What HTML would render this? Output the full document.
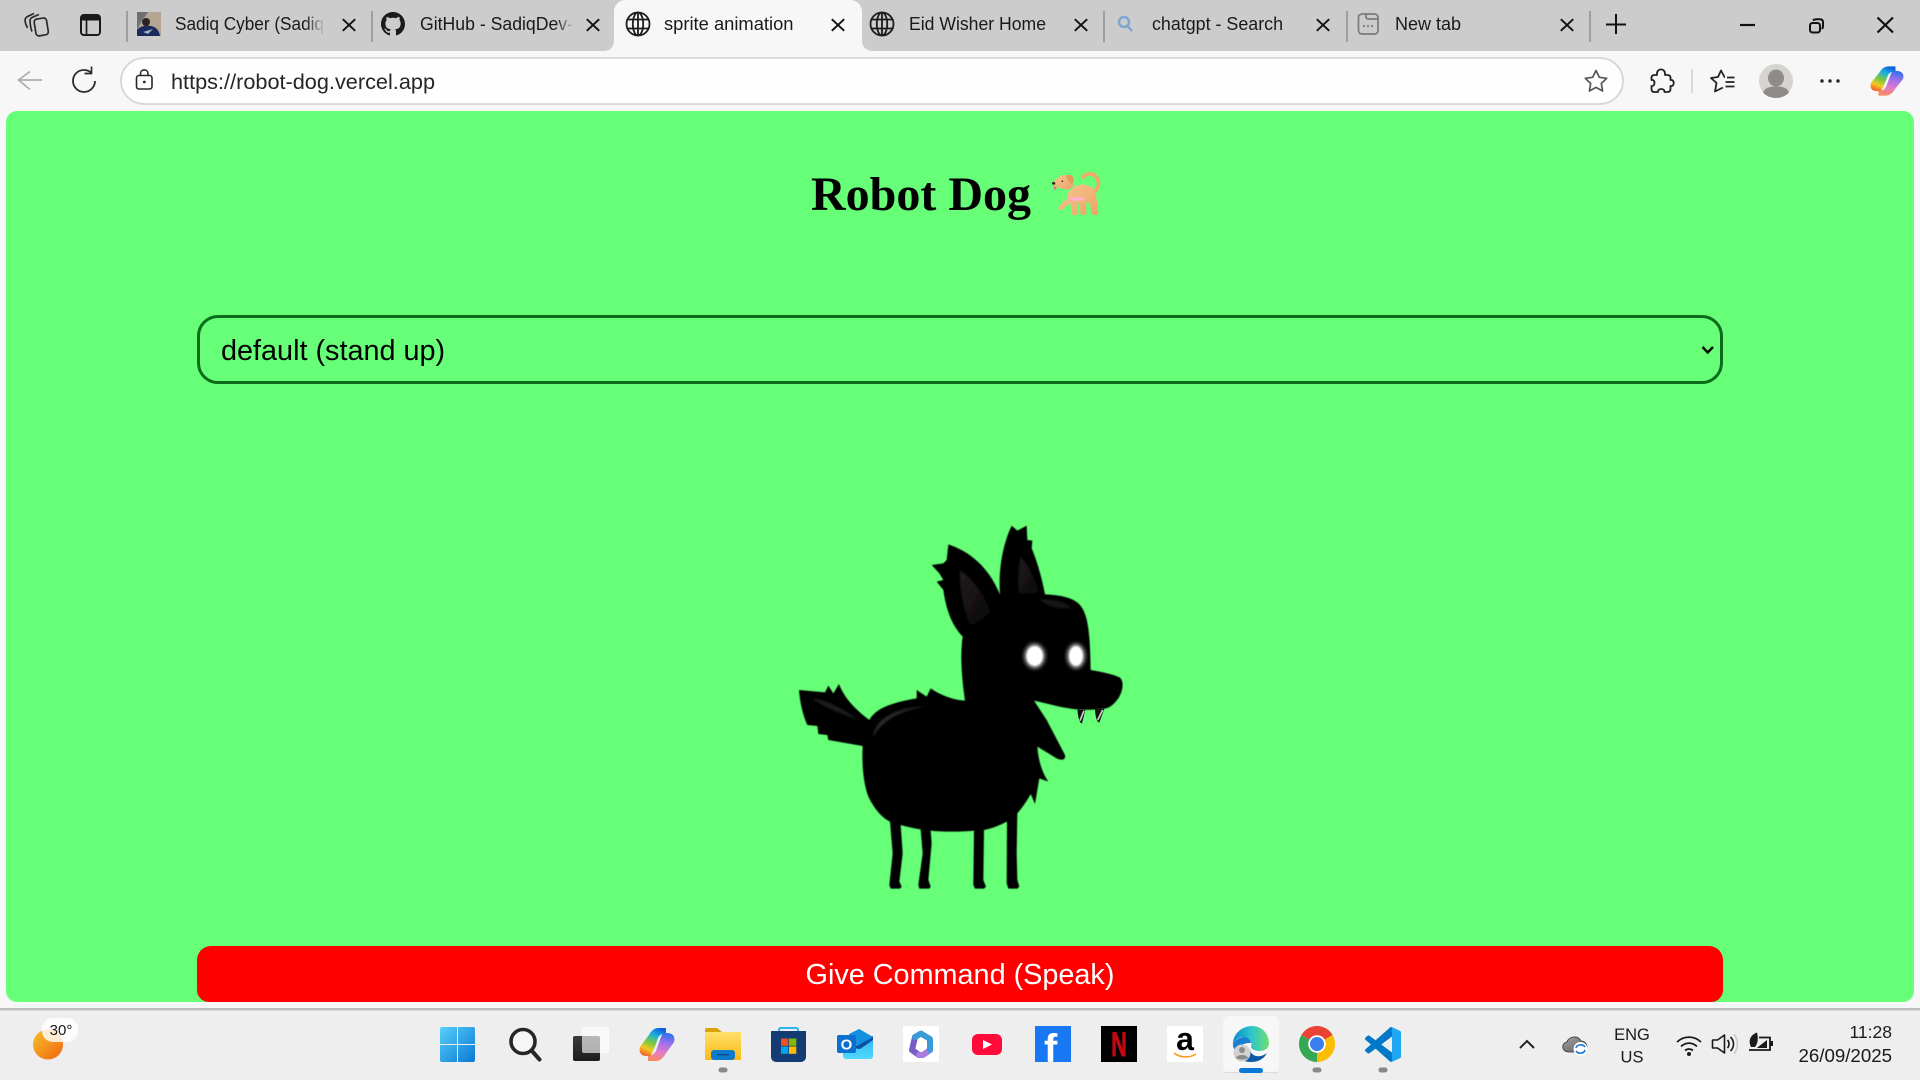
<!DOCTYPE html>
<html lang="en"><head><meta charset="utf-8"><title>sprite animation</title>
<style>
html,body{margin:0;padding:0;width:1920px;height:1080px;overflow:hidden;background:#f7f7f7;font-family:"Liberation Sans",sans-serif}
#page{position:absolute;left:6px;top:111px;width:1908px;height:891px;background:#66ff77;border-radius:11px;overflow:hidden}
h1{position:absolute;margin:0;left:805px;top:54px;font:bold 48px/60px "Liberation Serif",serif;color:#000;white-space:nowrap}
select{position:absolute;left:191px;top:204px;width:1526px;height:69px;box-sizing:border-box;border:3px solid #0d6b1b;border-radius:21px;background:transparent;appearance:none;-webkit-appearance:none;font:28.8px "Liberation Sans",sans-serif;color:#000;padding:2px 0 0 21px;outline:none}
button{position:absolute;left:191px;top:835px;width:1526px;height:56px;border:0;border-radius:14px 14px 12px 12px;background:#f00;color:#fff;font:28.8px "Liberation Sans",sans-serif;padding:2px 0 0}
#top{position:absolute;left:0;top:0;width:1920px;height:1080px;pointer-events:none}
#top text{font-family:"Liberation Sans",sans-serif;fill:#1a1a1a}
.x{stroke:#111;stroke-width:1.9;fill:none}
</style></head><body>
<div id="page">
<h1>Robot Dog</h1>
<select><option>default (stand up)</option></select>
<button>Give Command (Speak)</button>
</div>
<svg id="top" width="1920" height="1080" viewBox="0 0 1920 1080" xmlns="http://www.w3.org/2000/svg">
<defs>
<g id="globe" fill="none" stroke="#1c1c1c" stroke-width="1.8"><circle r="11.5"/><ellipse rx="5.2" ry="11.5"/><path d="M0-11.5V11.5M-10.5-4.5H10.5M-10.5 4.5H10.5"/></g>
<g id="xx" class="x"><path d="M-6.2-5.8 6.2 5.8M6.2-5.8-6.2 5.8"/></g>
<linearGradient id="fade"><stop offset="0" stop-color="#ccc" stop-opacity="0"/><stop offset="1" stop-color="#ccc"/></linearGradient>
<linearGradient id="cpA" x1=".7" y1="0" x2=".3" y2="1"><stop offset="0" stop-color="#1060e0"/><stop offset=".25" stop-color="#18b0e0"/><stop offset=".55" stop-color="#80c840"/><stop offset=".78" stop-color="#f4c820"/><stop offset="1" stop-color="#f06030"/></linearGradient>
<linearGradient id="cpB" x1=".6" y1="0" x2=".4" y2="1"><stop offset="0" stop-color="#2a70f0"/><stop offset=".35" stop-color="#a070ec"/><stop offset=".7" stop-color="#e47cc8"/><stop offset="1" stop-color="#f88a60"/></linearGradient>
<g id="copilot"><path fill="url(#cpB)" d="M25 97H48C60 97 68 86 74 76L96 45C102 32 96 20 84 18L66 16C60 30 56 44 48 66C44 78 34 82 25 82Z"/><path fill="url(#cpA)" d="M75 3H55C42 3 34 12 28 22L4 55C-2 68 4 80 15 82L32 84C38 70 44 58 52 34C56 22 66 18 75 18Z"/></g>
<linearGradient id="w1" x1="0" y1="0" x2="1" y2="1"><stop offset="0" stop-color="#58cffb"/><stop offset="1" stop-color="#0a78d4"/></linearGradient>
<linearGradient id="fold" x1="0" y1="0" x2="0" y2="1"><stop offset="0" stop-color="#ffe06a"/><stop offset="1" stop-color="#fbb913"/></linearGradient>
<linearGradient id="tv" x1="0" y1="0" x2="0" y2="1"><stop offset="0" stop-color="#3c3c3c"/><stop offset="1" stop-color="#1c1c1c"/></linearGradient>
<linearGradient id="olk" x1="0" y1="0" x2="0" y2="1"><stop offset="0" stop-color="#28a8ea"/><stop offset="1" stop-color="#50d9ff"/></linearGradient>
<linearGradient id="edgeT" x1="0" y1=".3" x2="1" y2=".3"><stop offset="0" stop-color="#0c8ad0"/><stop offset=".5" stop-color="#2cc4cc"/><stop offset="1" stop-color="#70e070"/></linearGradient>
<linearGradient id="sun" x1="0" y1="0" x2="1" y2="1"><stop offset="0" stop-color="#f5c22c"/><stop offset="1" stop-color="#f2640e"/></linearGradient>
<linearGradient id="cloud" x1="0" y1="0" x2="1" y2="1"><stop offset="0" stop-color="#a8a8a8"/><stop offset="1" stop-color="#555"/></linearGradient>
<linearGradient id="ear" x1="0" y1="0" x2="1" y2="1"><stop offset="0" stop-color="#241e21"/><stop offset="1" stop-color="#060506"/></linearGradient>
<linearGradient id="dogB" x1="0" y1="0" x2="1" y2="1"><stop offset="0" stop-color="#f8c68c"/><stop offset="1" stop-color="#eca268"/></linearGradient>
<filter id="glow" x="-80%" y="-80%" width="260%" height="260%"><feGaussianBlur stdDeviation="6"/></filter>
<filter id="soft" x="-20%" y="-20%" width="140%" height="140%"><feGaussianBlur stdDeviation="3"/></filter>
<filter id="eye" x="-20%" y="-20%" width="140%" height="140%"><feGaussianBlur stdDeviation="2"/></filter>
<filter id="body" x="-5%" y="-5%" width="110%" height="110%"><feGaussianBlur stdDeviation="1.400"/></filter>
</defs>

<!-- tab strip -->
<rect x="0" y="0" width="1920" height="51" fill="#ccc"/>
<rect x="0" y="51" width="1920" height="60" fill="#f7f7f7"/>
<path d="M602 51C611 51 614 47 614 40V12C614 5 619 0 626 0H850C857 0 862 5 862 12V40C862 47 866 51 874 51Z" fill="#f7f7f7"/>

<!-- collections -->
<g fill="none" stroke="#2a2a2a" stroke-width="1.7"><rect x="35" y="18.500" width="12.500" height="17" rx="3" transform="rotate(-9 41 27)"/><path d="M32 31.500C30.500 28 30.200 24 30 21C29.900 19 31 17.800 33 17L39 14.500"/><path d="M27.500 28C25.800 25 25.200 22.500 25 20.500C24.900 18.500 26 17.300 28 16.300L34 13.500"/></g>
<!-- vertical tabs -->
<rect x="81" y="15" width="19" height="20" rx="3" fill="none" stroke="#1a1a1a" stroke-width="2"/>
<path d="M81 16.500a2 2 0 0 1 2-2h15a2 2 0 0 1 2 2v4H81Z" fill="#1a1a1a"/><path d="M86.500 20V35" stroke="#1a1a1a" stroke-width="1.700"/>
<!-- separators -->
<g stroke="#8a8a8a" stroke-width="1.400"><path d="M127 11V42M372 11V42M1104 11V42M1347 11V42M1590 11V42"/></g>

<!-- tab 1 -->
<rect x="137" y="12" width="24" height="24" fill="#b5a593"/>
<path d="M137 30V12H148C146 16 143 18 141 22Z" fill="#6f6f78"/>
<path d="M137 36V30C140 26 146 25 151 26C156 27 159 30 160 36Z" fill="#1a2a5c"/><circle cx="146" cy="22" r="4" fill="#2c2422"/><path d="M143 32 153 29 148 34Z" fill="#a7b0c4"/>
<text x="175" y="30" font-size="18" textLength="149" lengthAdjust="spacingAndGlyphs">Sadiq Cyber (Sadiq</text>
<rect x="305" y="10" width="20" height="30" fill="url(#fade)"/>
<use href="#xx" x="349" y="25"/>
<!-- tab 2 -->
<g transform="translate(381,12) scale(1.5)"><path fill="#1b1b1b" d="M8 0C3.58 0 0 3.58 0 8c0 3.54 2.29 6.53 5.47 7.59.4.07.55-.17.55-.38 0-.19-.01-.82-.01-1.49-2.01.37-2.53-.49-2.69-.94-.09-.23-.48-.94-.82-1.13-.28-.15-.68-.52-.01-.53.63-.01 1.08.58 1.23.82.72 1.21 1.87.87 2.33.66.07-.52.28-.87.51-1.07-1.78-.2-3.64-.89-3.64-3.95 0-.87.31-1.59.82-2.15-.08-.2-.36-1.02.08-2.12 0 0 .67-.21 2.2.82.64-.18 1.32-.27 2-.27.68 0 1.36.09 2 .27 1.53-1.04 2.2-.82 2.2-.82.44 1.1.16 1.92.08 2.12.51.56.82 1.27.82 2.15 0 3.07-1.87 3.75-3.65 3.95.29.25.54.73.54 1.48 0 1.07-.01 1.93-.01 2.2 0 .21.15.46.55.38A8.013 8.013 0 0016 8c0-4.42-3.58-8-8-8z"/></g>
<text x="420" y="30" font-size="18" textLength="153" lengthAdjust="spacingAndGlyphs">GitHub - SadiqDev-</text>
<rect x="556" y="10" width="18" height="30" fill="url(#fade)"/>
<use href="#xx" x="593" y="25"/>
<!-- tab 3 -->
<use href="#globe" x="638" y="24"/>
<text x="664" y="30" font-size="18" textLength="129.500" lengthAdjust="spacingAndGlyphs">sprite animation</text>
<use href="#xx" x="838" y="25"/>
<!-- tab 4 -->
<use href="#globe" x="882" y="24"/>
<text x="909" y="30" font-size="18" textLength="137" lengthAdjust="spacingAndGlyphs">Eid Wisher Home</text>
<use href="#xx" x="1081" y="25"/>
<!-- tab 5 -->
<g fill="none" stroke="#7aa6d0" stroke-width="2.400"><circle cx="1124" cy="22" r="5"/><path d="M1127.500 26 1132 31"/></g>
<text x="1152" y="30" font-size="18" textLength="131" lengthAdjust="spacingAndGlyphs">chatgpt - Search</text>
<use href="#xx" x="1323" y="25"/>
<!-- tab 6 -->
<g fill="none" stroke="#7b7b7b" stroke-width="1.700"><rect x="1358.500" y="14" width="19.500" height="20" rx="3.500"/><path d="M1366 14V17C1366 18 1367 19 1368 19H1378"/></g>
<g fill="#7b7b7b"><circle cx="1364" cy="26" r="1.100"/><circle cx="1368" cy="26" r="1.100"/><circle cx="1372" cy="26" r="1.100"/></g>
<text x="1395" y="30" font-size="18" textLength="66" lengthAdjust="spacingAndGlyphs">New tab</text>
<use href="#xx" x="1567" y="25"/>
<!-- new tab + window controls -->
<path d="M1616 14V34M1606 24.500H1626" stroke="#111" stroke-width="2" fill="none"/>
<path d="M1740 25H1755" stroke="#111" stroke-width="2.200"/>
<g fill="none" stroke="#111" stroke-width="2"><rect x="1810" y="23" width="10" height="9.500" rx="2.500"/><path d="M1813 20.500C1814 19.500 1815 19.300 1816.500 19.300H1820C1822 19.300 1823 20.500 1823 22.300V26.500C1823 27.500 1822.500 28.200 1822 29"/></g>
<path d="M1877.500 17.500 1893 32.500M1893 17.500 1877.500 32.500" stroke="#111" stroke-width="2.200"/>

<!-- toolbar -->
<path d="M19 80H42M30 71.500 18.500 80 30 89.500" fill="none" stroke="#adadad" stroke-width="1.700"/>
<g fill="none" stroke="#2b2b2b" stroke-width="1.800"><path d="M91 72.500C88.500 70.500 86 70 84 70C77.500 70 73 75 73 81C73 87 78 92 84 92C90 92 95 87 95 81"/><path d="M91.500 66.500V73.500H84.500" stroke-width="1.700"/></g>
<rect x="121" y="58" width="1502" height="46" rx="23" fill="#fefefe" stroke="#d6d6d6" stroke-width="1.800"/>
<g fill="none" stroke="#2a2a2a" stroke-width="1.600"><rect x="136.500" y="75.500" width="15.500" height="13.500" rx="2.500"/><path d="M140.500 75.500V73.500C140.500 68.800 148 68.800 148 73.500V75.500"/></g><circle cx="144.300" cy="82" r="1.400" fill="#2a2a2a"/>
<text x="171" y="89" font-size="21.700" style="fill:#262626">https://robot-dog.vercel.app</text>
<path d="M1596 70.500 1599.300 77.300 1606.700 78.300 1601.300 83.500 1602.600 91 1596 87.400 1589.400 91 1590.700 83.500 1585.300 78.300 1592.700 77.300Z" fill="none" stroke="#555" stroke-width="1.700" stroke-linejoin="round"/>
<g transform="translate(-1,1.500)"><path d="M1658 73.500V72C1658 66.500 1666 66.500 1666 72V73.500H1668.500C1670.500 73.500 1671.500 74.500 1671.500 76.500V78.500C1675.800 77.500 1675.800 85.500 1671.500 84.500V87.500C1671.500 89.500 1670.500 90.500 1668.500 90.500H1665.500C1666 86.500 1658.500 86.500 1659 90.500H1655.500C1653.500 90.500 1652.500 89.500 1652.500 87.500V84.500C1656.500 85 1656.500 77.500 1652.500 78.500V76.500C1652.500 74.500 1653.500 73.500 1655.500 73.500Z" fill="none" stroke="#222" stroke-width="1.800" stroke-linejoin="round"/></g>
<path d="M1692 69V93" stroke="#cfcfcf" stroke-width="1.500"/>
<g fill="none" stroke="#222" stroke-width="1.800" stroke-linejoin="round"><path d="M1725 77H1724.500L1721 70.500 1718 77 1711 78 1716.500 83 1715 91.500 1723 87.500"/><path d="M1727 77.500H1734.500M1725.500 82H1734.500M1725.500 86.500H1734.500"/></g>
<ellipse cx="1776" cy="81" rx="17" ry="17" fill="#d6d4d0"/><ellipse cx="1776" cy="78" rx="8" ry="8.500" fill="#8f8b87"/><path d="M1763 92.500C1765 87.500 1770 86.500 1776 86.500C1782 86.500 1787 87.500 1789 92.500C1786 96 1781 98 1776 98C1771 98 1766 96 1763 92.500Z" fill="#8f8b87"/>
<g fill="#222"><circle cx="1822" cy="81" r="1.700"/><circle cx="1830" cy="81" r="1.700"/><circle cx="1838" cy="81" r="1.700"/></g>
<svg x="1870" y="65.500" width="34" height="31" viewBox="0 0 100 100" preserveAspectRatio="none"><use href="#copilot"/></svg>

<!-- title emoji -->
<svg x="1048" y="168" width="56" height="50" viewBox="803 54 168 150">
<path d="M908 82C918 66 950 66 954 96C956 112 948 122 938 126" fill="none" stroke="#f2a868" stroke-width="11" stroke-linecap="round"/>
<path d="M835 172C840 164 852 152 860 146L860 136C866 120 885 104 905 104C930 104 948 115 948 140L954 190C954 196 936 197 934 190L928 158L918 156L918 190C916 197 900 197 900 190L898 160 892 160 892 192C890 197 874 197 874 190L870 160C862 162 852 174 848 178C840 182 830 178 835 172Z" fill="url(#dogB)"/>
<path d="M868 141H912V152H868Z" fill="#ffb0c8"/>
<path d="M818 98C830 82 846 72 866 76C882 80 884 98 876 112C866 122 846 118 836 112L826 110C820 108 816 104 818 98Z" fill="url(#dogB)"/>
<path d="M856 78C866 72 880 74 880 88C880 98 870 104 866 96C864 90 858 86 856 78Z" fill="#e49a58"/>
<circle cx="846" cy="94" r="2.500" fill="#33231d"/>
<ellipse cx="820" cy="100" rx="5" ry="4" fill="#33231d"/>
<path d="M820 110C823 108 829 110 829 113C829 120 822 122 821 117Z" fill="#f56d8e"/>
</svg>

<!-- chevron -->
<path d="M1702.500 347 1707.700 352.500 1713 347" fill="none" stroke="#000" stroke-width="2.400"/>

<!-- dog -->
<g transform="translate(780,510) scale(.33333)">
<path fill="#000" filter="url(#body)" d="M505 103C570 125 625 170 660 253C655 190 665 110 695 47L712 62 725 55 740 47 742 90 757 92 755 115C770 150 785 200 795 253C840 255 880 262 900 285C925 315 930 370 932 480C960 485 1000 492 1020 503C1032 515 1030 540 1015 565C1000 585 990 592 975 596C930 602 890 598 890 598C850 595 800 580 762 572L800 630 855 735C858 750 845 752 830 745L772 710C775 750 785 785 805 815L778 805 765 882 752 852C740 875 725 895 712 910L710 1030 712 1110 718 1130 712 1136H685L680 1120 681 935C660 945 640 955 612 960L610 1110 618 1130 612 1136H585L580 1125 582 962C540 966 490 966 452 962L455 1000 445 1110 452 1130 448 1136H418L415 1125 428 1030 422 958C400 955 380 950 362 945L368 1030 358 1115 365 1130 360 1136H332L328 1125 338 1030 330 935C300 920 280 890 265 860C250 820 245 760 248 708L145 690 142 675 115 672 112 648 82 645C70 620 60 580 57 540L135 547 145 527 160 550 177 522C195 570 235 605 268 630C285 600 320 580 410 565L410 540 440 560 452 535C480 555 520 570 555 572C545 500 540 440 548 380C520 350 500 310 490 240L470 215 490 210 478 190 455 165 490 160 500 150Z"/>
<path d="M540 180C575 205 615 250 630 305C615 325 590 340 570 345C550 300 538 240 540 180Z" fill="url(#ear)" filter="url(#soft)"/>
<path d="M722 140C745 165 765 205 778 250L716 250C712 215 715 175 722 140Z" fill="url(#ear)" filter="url(#soft)"/>
<path d="M778 268C810 264 850 274 875 292C845 302 805 292 778 268Z" fill="#161616" filter="url(#soft)"/>
<path d="M95 565C130 565 190 595 235 630C180 610 130 590 95 565Z" fill="#1e1e1e" filter="url(#soft)"/>
<path d="M278 682C288 625 340 595 440 588C370 600 310 625 278 682Z" fill="#2c2c2c" filter="url(#soft)"/>
<ellipse cx="764" cy="438" rx="30" ry="36" fill="#fff" opacity=".8" filter="url(#glow)"/>
<ellipse cx="888" cy="438" rx="26" ry="36" fill="#fff" opacity=".8" filter="url(#glow)"/>
<ellipse cx="764" cy="438" rx="24" ry="29" fill="#fff" filter="url(#eye)"/>
<ellipse cx="888" cy="438" rx="20" ry="29" fill="#fff" filter="url(#eye)"/>
<path d="M892 598 916 600 906 640C898 640 894 620 892 598Z" fill="#111"/>
<path d="M900 632 912 602" stroke="#cfcfcf" stroke-width="5" fill="none"/>
<path d="M945 598 973 596 958 638C950 636 946 620 945 598Z" fill="#111"/>
<path d="M953 630 968 600" stroke="#cfcfcf" stroke-width="5" fill="none"/>
</g>

<!-- taskbar -->
<rect x="0" y="1002" width="1920" height="7" fill="#f7f7f7"/>
<rect x="0" y="1009" width="1920" height="71" fill="#eee"/>
<rect x="0" y="1008" width="1920" height="2.400" fill="#bdbdbd"/>

<circle cx="48" cy="1044.500" r="15" fill="url(#sun)"/>
<rect x="42" y="1018" width="36" height="24" rx="11" fill="#fff" opacity=".8"/>
<text x="61" y="1035" font-size="15" text-anchor="middle">30°</text>

<!-- windows -->
<path d="M440 1029a2 2 0 0 1 2-2H457V1044H440ZM458 1027H473a2 2 0 0 1 2 2V1044H458ZM440 1045H457V1062H442a2 2 0 0 1-2-2ZM458 1045H475V1060a2 2 0 0 1-2 2H458Z" fill="url(#w1)"/>
<!-- search -->
<circle cx="523" cy="1041.500" r="12" fill="#f6f6f6" stroke="#262626" stroke-width="3.600"/><path d="M532 1051 539.500 1059.500" stroke="#262626" stroke-width="4" stroke-linecap="round"/>
<!-- task view -->
<rect x="573" y="1036" width="27" height="25" rx="2" fill="url(#tv)"/>
<rect x="582" y="1027" width="27" height="26" rx="2" fill="#fff" opacity=".64"/>
<!-- copilot -->
<svg x="639" y="1027" width="36" height="35" viewBox="0 0 100 100" preserveAspectRatio="none"><use href="#copilot"/></svg>
<!-- folder -->
<path d="M705 1030a2 2 0 0 1 2-2H717L722 1032H740V1036H705Z" fill="#d9a205"/>
<path d="M705 1032H741V1060H705Z" fill="url(#fold)"/>
<rect x="711" y="1050" width="24" height="10" rx="3" fill="#0c7bcb"/><rect x="717" y="1054" width="12" height="1.500" fill="#064f8c"/>
<rect x="718.500" y="1067.500" width="9" height="5" rx="2.500" fill="#888"/>
<!-- store -->
<path d="M779 1034V1030C779 1028 780 1028 781 1028H796C797 1028 798 1028 798 1030V1034" fill="none" stroke="#2bb5ee" stroke-width="2"/>
<path d="M771 1031H806V1057a5 5 0 0 1-5 5H776a5 5 0 0 1-5-5Z" fill="#133c74"/>
<rect x="781" y="1038.500" width="7.300" height="7.300" fill="#f25022"/><rect x="789" y="1038.500" width="7.300" height="7.300" fill="#7fba00"/><rect x="781" y="1046.500" width="7.300" height="7.300" fill="#00a4ef"/><rect x="789" y="1046.500" width="7.300" height="7.300" fill="#ffb900"/>
<!-- outlook -->
<path d="M843 1040 859 1029 873 1037V1056a3 3 0 0 1-3 3H846a3 3 0 0 1-3-3Z" fill="url(#olk)"/>
<path d="M853 1048 873 1036V1040L860 1049Z" fill="#0a4fa0"/><path d="M849 1034 859 1029 873 1037 853 1048Z" fill="#1490df"/>
<rect x="837" y="1035" width="19" height="18" rx="2" fill="#0a6fcf"/>
<text x="846.500" y="1049.500" font-size="15" font-weight="bold" text-anchor="middle" style="fill:#fff">O</text>
<!-- m365 -->
<rect x="903" y="1026" width="36" height="36" fill="#fff"/>
<g fill="none" stroke-width="6" stroke-linejoin="round" stroke-linecap="round"><path d="M915 1037 912 1050 919 1055" stroke="#7a5cc8"/><path d="M919 1055 923 1055 930 1050" stroke="#a880dc"/><path d="M915 1037 921 1033.500 930 1039 930 1050" stroke="#3b9bd9"/></g>
<!-- youtube -->
<rect x="972" y="1034" width="30" height="21" rx="6" fill="#ff0a3a"/><path d="M983 1040 992 1044.500 983 1049Z" fill="#fff"/>
<!-- facebook -->
<rect x="1035" y="1026" width="36" height="36" fill="#1877f2"/>
<svg x="1035" y="1026" width="36" height="36"><text x="9" y="36" font-size="40" font-weight="bold" style="fill:#fff">f</text></svg>
<!-- netflix -->
<rect x="1101" y="1026" width="36" height="36" fill="#000"/>
<text transform="translate(1119,1056) scale(.72,1.150)" font-size="30" font-weight="bold" text-anchor="middle" style="fill:#c40812;stroke:#c40812;stroke-width:.8">N</text>
<!-- amazon -->
<rect x="1167" y="1026" width="36" height="36" fill="#fff"/>
<text x="1185" y="1050" font-size="32" font-weight="bold" text-anchor="middle" style="fill:#000">a</text>
<path d="M1174 1053C1180 1058 1190 1058 1196 1054" fill="none" stroke="#f39a1e" stroke-width="1.600"/>
<!-- edge -->
<rect x="1223" y="1016" width="56" height="57" rx="6" fill="#f7f7f7"/>
<path d="M1224 1072.500H1278" stroke="#dcdcdc" stroke-width="1.200"/>
<path d="M1233 1046C1232 1034 1242 1026 1252 1026C1262 1026 1269 1034 1269 1043C1269 1049 1264 1051 1259 1051C1255 1051 1251 1049 1251 1047C1253 1040 1248 1037 1243 1037C1238 1037 1234 1041 1233 1046Z" fill="url(#edgeT)"/>
<path d="M1250 1050C1251 1055 1256 1057 1261 1056C1264 1055 1266 1054 1267 1053C1264 1059 1258 1062 1251 1062C1245 1062 1240 1060 1238 1056C1241 1059 1248 1058 1250 1050Z" fill="#0d5aa7"/>
<path d="M1233 1046C1234 1040 1240 1037 1244 1037C1248 1037 1251 1040 1251 1043C1246 1043 1240 1044 1238 1050C1236 1053 1234 1050 1233 1046Z" fill="#1a7fd0"/>
<circle cx="1242" cy="1053" r="8.500" fill="#d2d2d0"/><circle cx="1242" cy="1050" r="3" fill="#8a8a88"/><path d="M1236 1058C1237 1054 1247 1054 1248 1058C1246 1060 1238 1060 1236 1058Z" fill="#8a8a88"/>
<rect x="1239" y="1068" width="24" height="5" rx="2.500" fill="#0a78d4"/>
<!-- chrome -->
<path d="M1317 1044 1301.400 1035A18 18 0 0 1 1332.600 1035Z" fill="#ea4335"/>
<path d="M1317 1044 1332.600 1035A18 18 0 0 1 1317 1062Z" fill="#fbbc04"/>
<path d="M1317 1044 1317 1062A18 18 0 0 1 1301.400 1035Z" fill="#34a853"/>
<circle cx="1317" cy="1044" r="8.800" fill="#fff"/><circle cx="1317" cy="1044" r="7" fill="#3b7fee"/>
<rect x="1312.500" y="1067.500" width="9" height="5" rx="2.500" fill="#888"/>
<!-- vscode -->
<g transform="translate(1365,1027) scale(.36,.35)"><path fill="#0078c8" fill-rule="evenodd" d="M70.900 99.300a6.200 6.200 0 0 0 4.900-.2l20.600-9.900A6.200 6.200 0 0 0 100 83.500V16.500a6.200 6.200 0 0 0-3.500-5.600L75.800.9a6.200 6.200 0 0 0-7.100 1.200L29.400 38 12.200 25a4.200 4.200 0 0 0-5.300.2L1.400 30.300a4.200 4.200 0 0 0 0 6.200L16.300 50 1.400 63.500a4.200 4.200 0 0 0 0 6.200l5.500 5a4.200 4.200 0 0 0 5.300.2l17.200-13 39.400 35.900a6.200 6.200 0 0 0 2.200 1.500zM75 27.300 45.100 50 75 72.700z"/><path fill="#1fa8f1" d="M71 99.300a6.200 6.200 0 0 0 4.800-.2l20.600-9.900A6.200 6.200 0 0 0 100 83.500V16.500a6.200 6.200 0 0 0-3.500-5.600L75.800.9A6.200 6.200 0 0 0 71 .5C73.500 1.500 75 4 75 6.500V93.500C75 96 73.500 98.300 71 99.300Z"/></g>
<rect x="1378.500" y="1067.500" width="9" height="5" rx="2.500" fill="#888"/>

<!-- tray -->
<path d="M1520 1048 1527 1041 1534 1048" fill="none" stroke="#222" stroke-width="2"/>
<path d="M1569 1052C1561 1052 1561 1043 1567 1042C1569 1036 1578 1035 1581 1041C1585 1041 1587 1044 1587 1048H1578V1052Z" fill="url(#cloud)" stroke="#333" stroke-width=".8"/>
<circle cx="1580.500" cy="1049" r="7" fill="#fff"/>
<g fill="none" stroke="#1a76d2" stroke-width="1.600"><path d="M1576 1048C1577 1044 1583 1044 1585 1047"/><path d="M1585 1050C1584 1054 1578 1054 1576 1051"/></g>
<g fill="none" stroke="#1a1a1a" stroke-width="1.800"><path d="M1677 1042C1684 1035.500 1694 1035.500 1701 1042"/><path d="M1681 1046.500C1686 1042 1692 1042 1697 1046.500"/><path d="M1685 1050.500C1687.500 1048.500 1690.500 1048.500 1693 1050.500"/></g><circle cx="1689" cy="1054" r="2" fill="#1a1a1a"/>
<g transform="translate(-1.500,0)"><path d="M1714 1040H1719L1726 1035V1053L1719 1048H1714Z" fill="none" stroke="#1a1a1a" stroke-width="1.600" stroke-linejoin="round"/>
<g fill="none" stroke-width="1.600"><path d="M1729 1040C1731 1042 1731 1046 1729 1048" stroke="#1a1a1a"/><path d="M1732 1037C1736 1041 1736 1047 1732 1051" stroke="#1a1a1a"/><path d="M1735.500 1034C1740 1040 1740 1048 1735.500 1054" stroke="#c9c9c9"/></g></g>
<path d="M1749 1050H1770V1037.500H1759" fill="none" stroke="#1a1a1a" stroke-width="1.800"/>
<rect x="1770" y="1041" width="3" height="5" fill="#1a1a1a"/>
<path d="M1757 1032.500C1750 1035 1748 1041 1751 1047L1755 1047C1758 1043 1758.500 1038 1757 1032.500Z" fill="#1a1a1a"/>
<path d="M1758 1047 1767 1040V1048H1757Z" fill="#1a1a1a"/>
<text x="1632" y="1040" font-size="16.500" text-anchor="middle">ENG</text>
<text x="1632" y="1062.500" font-size="16.500" text-anchor="middle">US</text>
<text x="1892" y="1038" font-size="17.500" text-anchor="end">11:28</text>
<text x="1892" y="1062" font-size="18.700" text-anchor="end">26/09/2025</text>
</svg>
</body></html>
